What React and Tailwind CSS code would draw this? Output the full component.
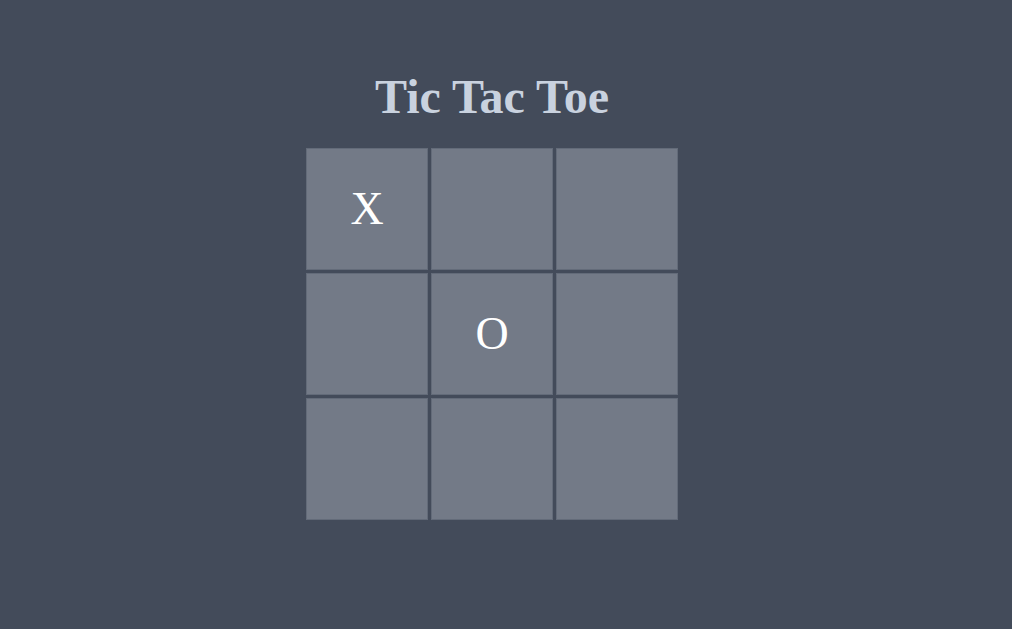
export default function App() {
  const board = ['X', '', '', '', 'O', '', '', '', ''];

  return (
    <div className="min-h-screen bg-[#434b5a] flex flex-col items-center pr-[28px] pt-[73px] font-['Liberation_Serif',serif]">
      <h1 className="text-[48px] leading-none font-bold text-[#c9d2df]">Tic Tac Toe</h1>
      <div className="mt-[27px] grid grid-cols-[repeat(3,122px)] grid-rows-[repeat(3,122px)] gap-[3px]">
        {board.map((cell, i) => (
          <div
            key={i}
            className="flex items-center justify-center bg-[#737a87] border border-[#636b79] text-white text-[46px] leading-none"
          >
            {cell}
          </div>
        ))}
      </div>
    </div>
  );
}
